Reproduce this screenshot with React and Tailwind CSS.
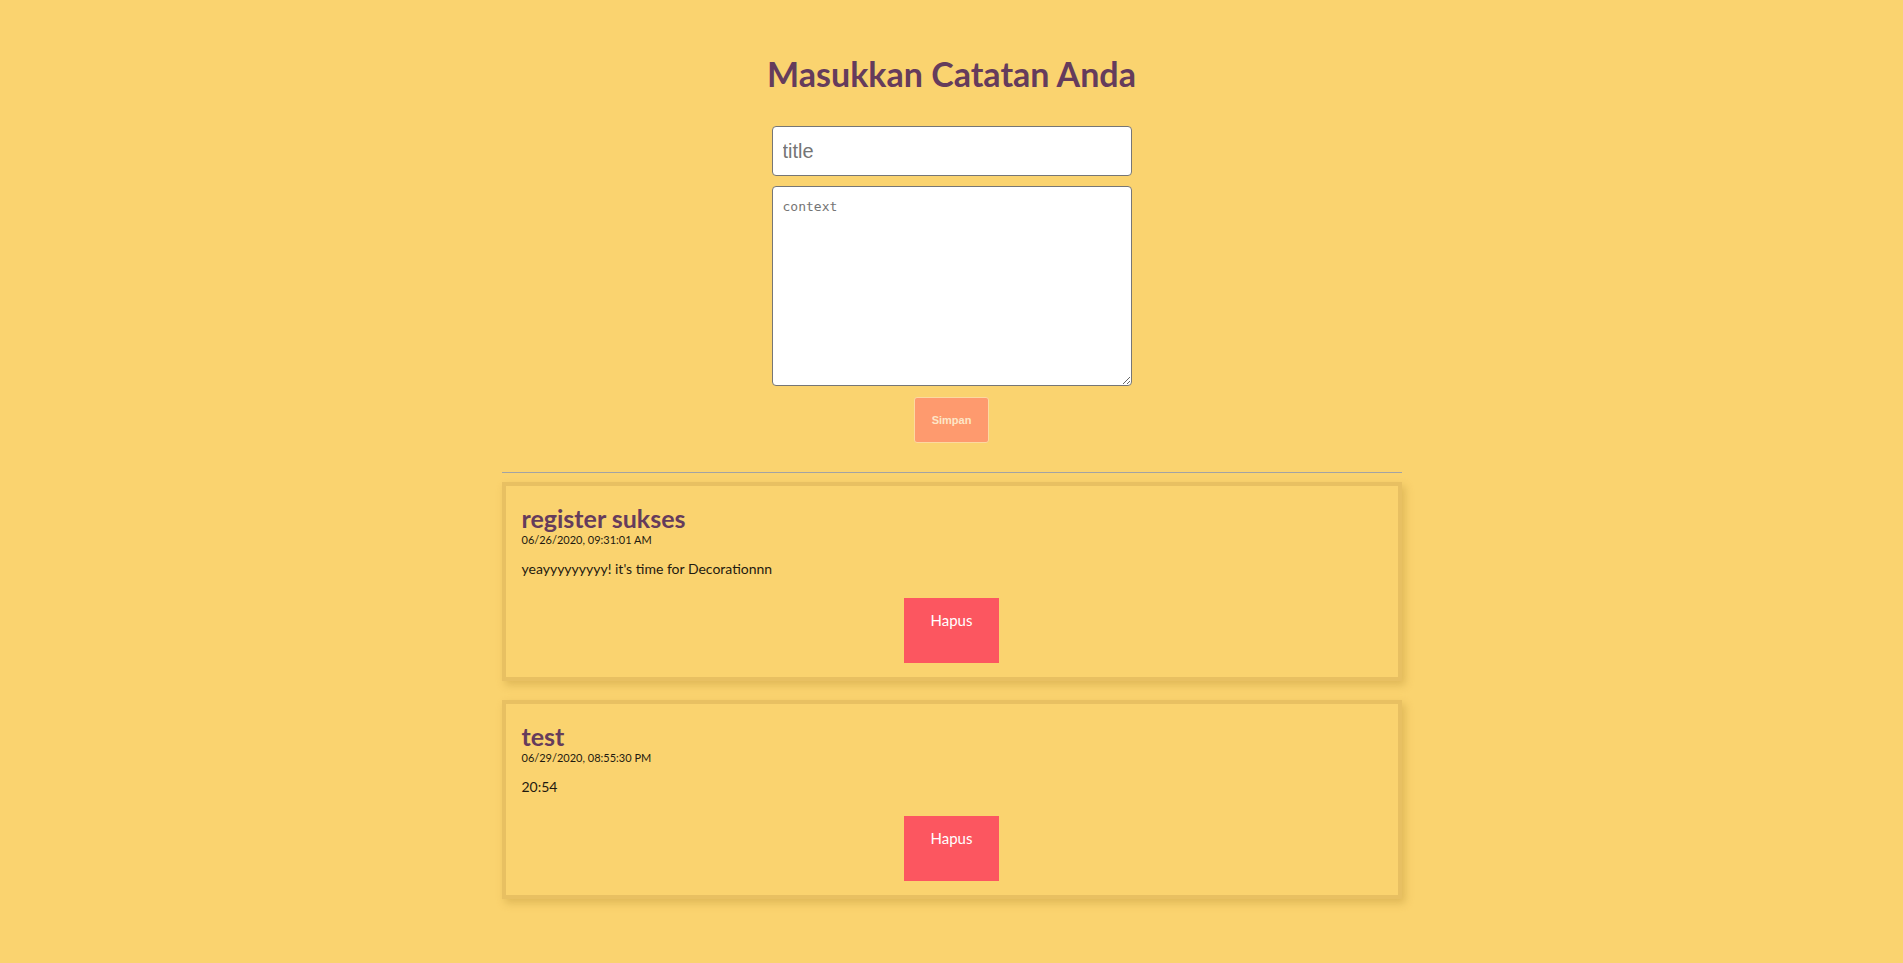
const NOTES = [
  {
    id: 1,
    title: 'register sukses',
    date: '06/26/2020, 09:31:01 AM',
    body: "yeayyyyyyyyy! it's time for Decorationnn",
  },
  { id: 2, title: 'test', date: '06/29/2020, 08:55:30 PM', body: '20:54' },
];

function NoteCard({ note }) {
  return (
    <div className="border-4 border-[#e8c062] bg-[#fad36f] px-4 pt-[18px] pb-[14px] shadow-[3px_4px_8px_rgba(190,150,60,0.45)]">
      <h2 className="text-[25px] leading-[28px] font-bold text-[#653c5c]">{note.title}</h2>
      <p className="text-[11px] leading-[16px] text-[#1f1a10]">{note.date}</p>
      <p className="mt-[12px] text-[14px] leading-[18px] text-[#1f1a10]">{note.body}</p>
      <div className="flex justify-center mt-[20px]">
        <button className="w-[95px] h-[65px] bg-[#fc5660] text-white text-[15px] leading-[20px] pt-[12px] flex justify-center items-start">
          Hapus
        </button>
      </div>
    </div>
  );
}

export default function App() {
  return (
    <div className="min-h-screen bg-[#fad36f] font-['Lato','Open_Sans',sans-serif]">
      <div className="w-[900px] mx-auto pt-[54px] pb-[60px]">
        <h1 className="text-center text-[34px] leading-[40px] font-bold text-[#653c5c]">Masukkan Catatan Anda</h1>

        <form className="flex flex-col items-center mt-[32px]">
          <input
            placeholder="title"
            className="w-[360px] h-[50px] bg-white border border-[#767676] rounded-[4px] px-[10px] text-[20px] font-['Liberation_Sans',Arial,sans-serif] placeholder:text-[#757575] outline-none"
          />
          <textarea
            placeholder="context"
            className="mt-[10px] w-[360px] h-[200px] bg-white border border-[#767676] rounded-[4px] px-[10px] py-[10px] text-[13px] font-['DejaVu_Sans_Mono',monospace] placeholder:text-[#757575] outline-none"
          />
          <button
            type="button"
            className="mt-[11px] w-[75px] h-[46px] bg-[#fe9a6e] border border-[#fcd9a0] rounded-[3px] text-[11px] font-bold text-[#fde6c7] font-['Liberation_Sans',Arial,sans-serif]"
          >
            Simpan
          </button>
        </form>

        <hr className="mt-[29px] border-t border-[#a3a3a3]" />

        <div className="mt-[9px] flex flex-col gap-[19px]">
          {NOTES.map((n) => (
            <NoteCard key={n.id} note={n} />
          ))}
        </div>
      </div>
    </div>
  );
}
